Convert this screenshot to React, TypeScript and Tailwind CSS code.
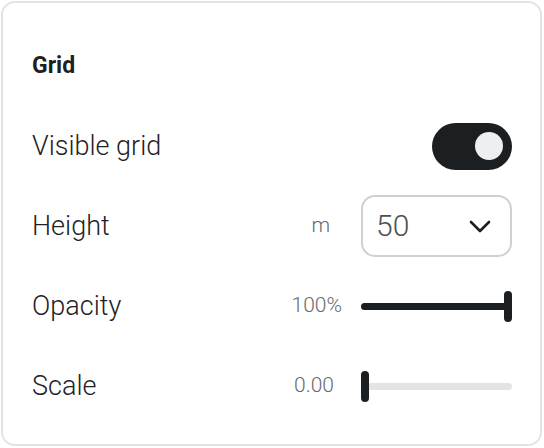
import React from 'react';

const font = { fontFamily: 'Roboto, "Noto Sans", sans-serif' };

function Toggle({ on }: { on: boolean }) {
  return (
    <div
      className={`flex h-[47px] w-[80px] items-center rounded-full px-[9px] ${
        on ? 'justify-end bg-[#1c1f22]' : 'justify-start bg-[#e3e4e6]'
      }`}
    >
      <div className="h-[28px] w-[28px] rounded-full bg-[#eeeff1]" />
    </div>
  );
}

function Slider({ value }: { value: number }) {
  // value 0..1
  return (
    <div className="relative flex h-[32px] w-[151px] items-center">
      <div className="h-[7px] w-full rounded-full bg-[#e3e4e6]" />
      <div
        className="absolute left-0 h-[7px] rounded-full bg-[#1c1f22]"
        style={{ width: `${value * 100}%` }}
      />
      <div
        className="absolute h-[31px] w-[8px] rounded-full bg-[#1c1f22]"
        style={{ left: `calc(${value * 100}% - ${value * 8}px)` }}
      />
    </div>
  );
}

function Row({ label, children }: { label: string; children: React.ReactNode }) {
  return (
    <div className="flex h-[80px] items-center justify-between">
      <span className="text-[27px] font-light leading-none text-[#1f2225]">{label}</span>
      <div className="flex items-center">{children}</div>
    </div>
  );
}

export default function App() {
  return (
    <div className="h-[448px] w-[544px] bg-white p-px" style={font}>
      <div className="flex h-[445px] w-[541px] flex-col rounded-[14px] border-2 border-[#e4e4e4] bg-white pl-[29px] pr-[28px] pt-[50px]">
        <h2 className="h-[26px] text-[23px] font-bold leading-[26px] text-[#1d2023]">Grid</h2>
        <div className="mt-[27px] flex flex-col">
          <Row label="Visible grid">
            <Toggle on />
          </Row>
          <Row label="Height">
            <span className="mr-[31px] text-[21px] font-light text-[#66696c]">m</span>
            <button className="flex h-[62px] w-[151px] items-center justify-between rounded-[14px] border-2 border-[#cfd0d2] pl-[13px] pr-[19px]">
              <span className="text-[30px] font-light leading-none text-[#4d5053]">50</span>
              <svg width="22" height="13" viewBox="0 0 22 13" fill="none">
                <polyline
                  points="2,2 11,11 20,2"
                  stroke="#1c1f22"
                  strokeWidth="2.6"
                  strokeLinecap="round"
                  strokeLinejoin="round"
                />
              </svg>
            </button>
          </Row>
          <Row label="Opacity">
            <span className="mr-[19px] text-[21px] font-light text-[#66696c]">100%</span>
            <Slider value={1} />
          </Row>
          <Row label="Scale">
            <span className="mr-[27px] text-[21px] font-light text-[#66696c]">0.00</span>
            <Slider value={0} />
          </Row>
        </div>
      </div>
    </div>
  );
}
